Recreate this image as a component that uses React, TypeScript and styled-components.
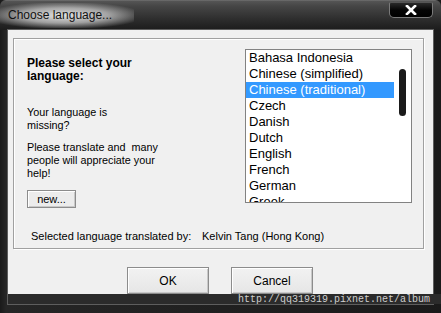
import React from 'react';
import styled, { createGlobalStyle } from 'styled-components';

const GlobalStyle = createGlobalStyle`
  html, body {
    margin: 0;
    padding: 0;
    background: #000;
  }
  body {
    font-family: "Liberation Sans", Arial, sans-serif;
  }
`;

const Window = styled.div`
  position: relative;
  width: 441px;
  height: 313px;
  overflow: hidden;
  display: flex;
  flex-direction: column;
  background: linear-gradient(90deg, #1a1a1a 0, #262626 6px, #1a1a1a 100%);
`;

const TitleBar = styled.div`
  height: 30px;
  flex: none;
  display: flex;
  justify-content: space-between;
  align-items: flex-start;
  background: linear-gradient(#7a7a7a 0, #555 1px, #464646 6px, #2c2c2c 20px, #1c1c1c 100%);
  border-radius: 6px 6px 0 0;
`;

const Title = styled.div`
  margin: 3px 0 0 0;
  padding: 5px 22px 6px 8px;
  font-size: 12px;
  line-height: 14px;
  color: #111;
  background: radial-gradient(ellipse 60% 55% at 48% 50%, rgba(235, 235, 235, 0.95) 0, rgba(200, 200, 200, 0.75) 55%, rgba(120, 120, 120, 0) 100%);
`;

const CloseButton = styled.div`
  width: 44px;
  height: 16px;
  margin: 2px 8px 0 0;
  display: flex;
  align-items: center;
  justify-content: center;
  background: linear-gradient(#2a2a2a, #050505 50%, #000);
  border: 1px solid #7a7a7a;
  border-top-color: #555;
  border-radius: 2px 2px 5px 5px;
  box-sizing: border-box;
`;

const Client = styled.div`
  margin: 0 8px;
  height: 274px;
  flex: none;
  background: #f0f0f0;
  box-shadow: 0 0 0 1px #5e5e5e;
  padding: 8px 9px 0 5px;
  box-sizing: border-box;
  display: flex;
  flex-direction: column;
`;

const GroupBox = styled.div`
  height: 211px;
  box-sizing: border-box;
  border: 1px solid #a0a0a0;
  box-shadow: inset 1px 1px 0 #fff, 1px 1px 0 #fff;
  padding: 10px 11px 0 13px;
  display: flex;
  flex-direction: column;
`;

const TopRow = styled.div`
  display: flex;
  justify-content: space-between;
`;

const LeftColumn = styled.div`
  display: flex;
  flex-direction: column;
  padding-top: 8px;
  width: 200px;
`;

const Heading = styled.div`
  font-size: 12px;
  font-weight: bold;
  line-height: 13px;
  color: #000;
`;

const Paragraph = styled.div<{ $gap: number }>`
  margin-top: ${(p) => p.$gap}px;
  font-size: 10.8px;
  line-height: 13px;
  color: #000;
  white-space: pre-line;
`;

const ClassicButton = styled.button<{ $w: number; $h: number }>`
  width: ${(p) => p.$w}px;
  height: ${(p) => p.$h}px;
  padding: 0;
  font-family: "Liberation Sans", Arial, sans-serif;
  font-size: 11px;
  color: #000;
  background: #ececec;
  border: 1px solid #8c8c8c;
  box-shadow: inset 1px 1px 0 #fff, inset -1px -1px 0 #c8c8c8;
  box-sizing: border-box;
`;

const NewButton = styled(ClassicButton)`
  margin-top: 10px;
`;

const ListBox = styled.div`
  width: 167px;
  height: 154px;
  box-sizing: border-box;
  border: 1px solid #828282;
  background: #fff;
  display: flex;
  overflow: hidden;
`;

const Items = styled.div`
  width: 148px;
  display: flex;
  flex-direction: column;
`;

const Item = styled.div<{ $selected?: boolean }>`
  height: 16px;
  flex: none;
  padding-left: 3px;
  font-size: 13px;
  line-height: 16px;
  white-space: nowrap;
  color: ${(p) => (p.$selected ? '#fff' : '#000')};
  background: ${(p) => (p.$selected ? '#3399ff' : 'transparent')};
`;

const ScrollTrack = styled.div`
  flex: 1;
  display: flex;
  justify-content: center;
  padding-top: 19px;
`;

const Thumb = styled.div`
  width: 7px;
  height: 47px;
  border-radius: 4px;
  background: #1a1a1a;
`;

const TranslatorRow = styled.div`
  display: flex;
  margin: 22px 0 0 4px;
  font-size: 11px;
  line-height: 13px;
  color: #000;
`;

const TranslatorLabel = styled.div`
  width: 171px;
`;

const ButtonRow = styled.div`
  display: flex;
  justify-content: center;
  gap: 22px;
  margin-top: 18px;
  padding-left: 3px;
`;

const DialogButton = styled(ClassicButton)`
  font-size: 12px;
  background: linear-gradient(#f2f2f2, #e6e6e6);
`;

const Watermark = styled.div`
  position: absolute;
  left: 8px;
  right: 0;
  top: 294px;
  height: 10px;
  background: #2b2b2b;
  display: flex;
  justify-content: flex-end;
  align-items: center;
  padding-right: 11px;
  font-family: "Liberation Mono", "Courier New", monospace;
  font-size: 10px;
  color: #cfcfcf;
`;

const languages = [
  'Bahasa Indonesia',
  'Chinese (simplified)',
  'Chinese (traditional)',
  'Czech',
  'Danish',
  'Dutch',
  'English',
  'French',
  'German',
  'Greek',
];

const App: React.FC = () => {
  return (
    <>
      <GlobalStyle />
      <Window>
        <TitleBar>
          <Title>Choose language...</Title>
          <CloseButton>
            <svg width="12" height="10" viewBox="0 0 12 10">
              <path d="M2 1 L10 9 M10 1 L2 9" stroke="#fff" strokeWidth="2.6" strokeLinecap="square" />
            </svg>
          </CloseButton>
        </TitleBar>
        <Client>
          <GroupBox>
            <TopRow>
              <LeftColumn>
                <Heading>
                  Please select your
                  <br />
                  language:
                </Heading>
                <Paragraph $gap={23}>{'Your language is\nmissing?'}</Paragraph>
                <Paragraph $gap={9}>
                  {'Please translate and\u00a0 many\npeople will appreciate your\nhelp!'}
                </Paragraph>
                <NewButton $w={49} $h={18}>new...</NewButton>
              </LeftColumn>
              <ListBox>
                <Items>
                  {languages.map((lang) => (
                    <Item key={lang} $selected={lang === 'Chinese (traditional)'}>
                      {lang}
                    </Item>
                  ))}
                </Items>
                <ScrollTrack>
                  <Thumb />
                </ScrollTrack>
              </ListBox>
            </TopRow>
            <TranslatorRow>
              <TranslatorLabel>Selected language translated by:</TranslatorLabel>
              <div>Kelvin Tang (Hong Kong)</div>
            </TranslatorRow>
          </GroupBox>
          <ButtonRow>
            <DialogButton $w={82} $h={27}>OK</DialogButton>
            <DialogButton $w={82} $h={27}>Cancel</DialogButton>
          </ButtonRow>
        </Client>
        <Watermark>http://qq319319.pixnet.net/album</Watermark>
      </Window>
    </>
  );
};

export default App;
